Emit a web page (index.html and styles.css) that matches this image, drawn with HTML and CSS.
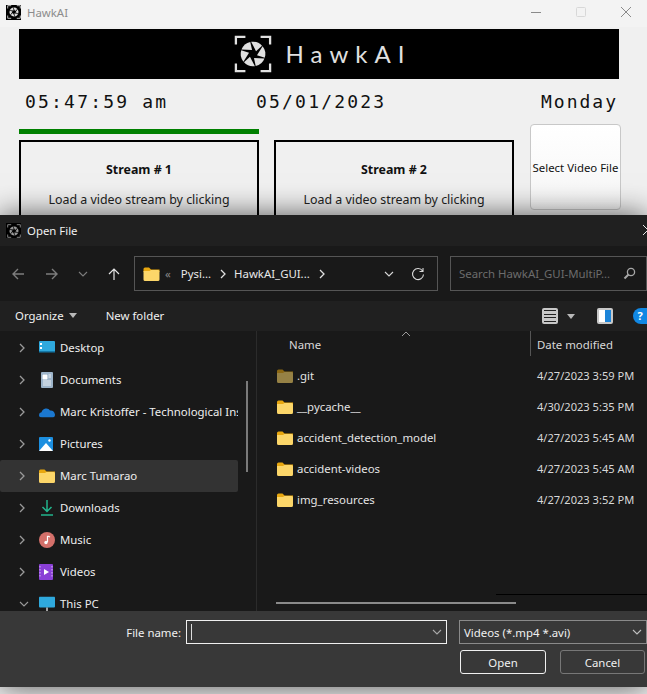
FILE: index.html
```html
<!DOCTYPE html>
<html lang="en">
<head>
  <meta charset="UTF-8">
  <meta name="viewport" content="width=device-width, initial-scale=1.0">
  <title>HawkAI</title>
  <link rel="stylesheet" href="styles.css">
</head>
<body>

  <svg class="defs" width="0" height="0">
    <symbol id="folder" viewBox="0 0 16 14">
      <path d="M0 2 Q0 0.5 1.5 0.5 H5.5 L7.5 2.5 H16 V5 H0 Z" fill="#e8a70f"/>
      <path d="M0 4 H6 L7.5 3 H14.5 Q16 3 16 4.5 V12.5 Q16 14 14.5 14 H1.5 Q0 14 0 12.5 Z" fill="#fcd669"/>
    </symbol>
    <symbol id="shutter" viewBox="0 0 40 40">
      <path d="M2 10 V2 H12 M28 2 H38 V10 M38 30 V38 H28 M12 38 H2 V30" fill="none" stroke="currentColor" stroke-width="2.4"/>
      <g fill="currentColor">
        <path id="blade" d="M18 7.2 A13 13 0 0 1 29.5 11.2 L23.2 17 Z"/>
        <use href="#blade" transform="rotate(60 20 20)"/>
        <use href="#blade" transform="rotate(120 20 20)"/>
        <use href="#blade" transform="rotate(180 20 20)"/>
        <use href="#blade" transform="rotate(240 20 20)"/>
        <use href="#blade" transform="rotate(300 20 20)"/>
      </g>
    </symbol>
    <symbol id="chev" viewBox="0 0 8 12">
      <path d="M2 2 L6 6 L2 10" fill="none" stroke="currentColor" stroke-width="1.3"/>
    </symbol>
    <symbol id="down" viewBox="0 0 12 8">
      <path d="M2 2 L6 6 L10 2" fill="none" stroke="currentColor" stroke-width="1.1"/>
    </symbol>
  </svg>

  <div id="app">
    <div class="app-title">
      <span class="app-icon"><svg width="14" height="14"><use href="#shutter"/></svg></span>
      <span class="app-name">HawkAI</span>
      <div class="win-buttons">
        <svg width="12" height="12" viewBox="0 0 12 12"><path d="M1 6.5 H11" stroke="#8a8a8a"/></svg>
        <svg width="12" height="12" viewBox="0 0 12 12"><rect x="1.5" y="1.5" width="9" height="9" rx="1" fill="none" stroke="#d8d8d8"/></svg>
        <svg width="12" height="12" viewBox="0 0 12 12"><path d="M1 1 L11 11 M11 1 L1 11" stroke="#8a8a8a"/></svg>
      </div>
    </div>

    <div class="banner">
      <svg class="banner-logo" width="38" height="38"><use href="#shutter"/></svg>
      <span class="banner-text">HawkAI</span>
    </div>

    <div class="clock-row">
      <span class="clock-time">05:47:59 am</span>
      <span class="clock-date">05/01/2023</span>
      <span class="clock-day">Monday</span>
    </div>

    <div class="streams">
      <div class="stream-col">
        <div class="stream-bar"></div>
        <div class="stream-box">
          <p class="stream-title">Stream # 1</p>
          <p class="stream-hint">Load a video stream by clicking</p>
        </div>
      </div>
      <div class="stream-col">
        <div class="stream-bar off"></div>
        <div class="stream-box">
          <p class="stream-title">Stream # 2</p>
          <p class="stream-hint">Load a video stream by clicking</p>
        </div>
      </div>
      <button class="select-btn">Select Video File</button>
    </div>
  </div>

  <div id="dialog">
    <div class="dlg-title">
      <span class="app-icon dim"><svg width="14" height="14"><use href="#shutter"/></svg></span>
      <span>Open File</span>
      <svg class="dlg-close" width="12" height="12" viewBox="0 0 12 12"><path d="M1 1 L11 11 M11 1 L1 11" stroke="#e8e8e8"/></svg>
    </div>

    <div class="dlg-nav">
      <div class="nav-buttons">
        <svg width="14" height="14" viewBox="0 0 14 14"><path d="M13 7 H2 M7 2 L2 7 L7 12" fill="none" stroke="#7d7d7d" stroke-width="1.4"/></svg>
        <svg width="14" height="14" viewBox="0 0 14 14"><path d="M1 7 H12 M7 2 L12 7 L7 12" fill="none" stroke="#7d7d7d" stroke-width="1.4"/></svg>
        <svg class="nav-small" width="12" height="8" color="#7d7d7d"><use href="#down"/></svg>
        <svg width="14" height="14" viewBox="0 0 14 14"><path d="M7 13 V2 M2 7 L7 2 L12 7" fill="none" stroke="#e6e6e6" stroke-width="1.2"/></svg>
      </div>
      <div class="address">
        <svg class="addr-folder" width="17" height="14"><use href="#folder"/></svg>
        <span class="addr-more">&laquo;</span>
        <span>Pysi...</span>
        <svg class="addr-sep" width="8" height="12"><use href="#chev"/></svg>
        <span>HawkAI_GUI...</span>
        <svg class="addr-sep" width="8" height="12"><use href="#chev"/></svg>
        <svg class="addr-down" width="12" height="8" color="#d8d8d8"><use href="#down"/></svg>
        <svg class="addr-refresh" width="14" height="14" viewBox="0 0 14 14"><path d="M11.6 4 A5.5 5.5 0 1 0 12.5 7.5 M12 1 V4.5 H8.5" fill="none" stroke="#d8d8d8" stroke-width="1.1"/></svg>
      </div>
      <div class="search">
        <span>Search HawkAI_GUI-MultiP...</span>
        <svg width="13" height="13" viewBox="0 0 13 13"><circle cx="8" cy="5" r="3.6" fill="none" stroke="#a8a8a8" stroke-width="1.3"/><path d="M5.5 7.5 L1.5 11.5" stroke="#a8a8a8" stroke-width="2"/></svg>
      </div>
    </div>

    <div class="dlg-tools">
      <span class="tool-link">Organize <i class="caret"></i></span>
      <span class="tool-link">New folder</span>
      <div class="tool-right">
        <span class="view-icon"><i></i><i></i><i></i><i></i></span>
        <i class="caret"></i>
        <span class="pane-icon"><i></i></span>
        <span class="help-icon">?</span>
      </div>
    </div>

    <div class="dlg-main">
      <div class="sidebar">
        <div class="side-row"><svg class="side-chev" width="8" height="12"><use href="#chev"/></svg>
          <svg width="16" height="14" viewBox="0 0 16 14"><rect width="16" height="11" rx="1" fill="#2fa9dd"/><rect x="1" y="2" width="2" height="2" fill="#fff"/><rect x="1" y="6" width="2" height="2" fill="#fff"/><rect y="10" width="16" height="1.5" fill="#1478a8"/></svg>
          <span>Desktop</span></div>
        <div class="side-row"><svg class="side-chev" width="8" height="12"><use href="#chev"/></svg>
          <svg width="16" height="16" viewBox="0 0 16 16"><rect x="2" width="12" height="16" rx="1" fill="#9db4c9"/><path d="M4 3 H8 V7 H4 Z M9.5 3 H12 M9.5 5 H12 M4 9 H12 M4 11 H12 M4 13 H12" fill="#fff" stroke="#fff" stroke-width=".8"/></svg>
          <span>Documents</span></div>
        <div class="side-row"><svg class="side-chev" width="8" height="12"><use href="#chev"/></svg>
          <svg width="16" height="11" viewBox="0 0 16 11"><path d="M3 11 Q0 11 0 8.5 Q0 6 2.5 5.8 Q3.5 2.5 6.5 2 Q9.5 1.5 11 4 Q15 3.5 16 8 Q16 11 13.5 11 Z" fill="#1b78d0"/></svg>
          <span class="clip">Marc Kristoffer - Technological Ins</span></div>
        <div class="side-row"><svg class="side-chev" width="8" height="12"><use href="#chev"/></svg>
          <svg width="14" height="14" viewBox="0 0 14 14"><rect width="14" height="14" rx="1" fill="#1c8fe0"/><path d="M0 14 L7 6 L14 14 Z" fill="#fff"/><circle cx="10.5" cy="3.5" r="1.2" fill="#fff"/></svg>
          <span>Pictures</span></div>
        <div class="side-row selected"><svg class="side-chev" width="8" height="12"><use href="#chev"/></svg>
          <svg width="16" height="14"><use href="#folder"/></svg>
          <span>Marc Tumarao</span></div>
        <div class="side-row"><svg class="side-chev" width="8" height="12"><use href="#chev"/></svg>
          <svg width="16" height="16" viewBox="0 0 16 16"><path d="M8 0 V11 M3.5 7 L8 11.5 L12.5 7 M2 15 H14" fill="none" stroke="#22b48c" stroke-width="1.5"/></svg>
          <span>Downloads</span></div>
        <div class="side-row"><svg class="side-chev" width="8" height="12"><use href="#chev"/></svg>
          <svg width="16" height="16" viewBox="0 0 16 16"><circle cx="8" cy="8" r="8" fill="#d4706a"/><path d="M8.5 4 V10" stroke="#fff" stroke-width="1.2"/><circle cx="7" cy="10.5" r="1.7" fill="#fff"/><path d="M8.5 4 L11 5" stroke="#fff" stroke-width="1.2"/></svg>
          <span>Music</span></div>
        <div class="side-row"><svg class="side-chev" width="8" height="12"><use href="#chev"/></svg>
          <svg width="14" height="16" viewBox="0 0 14 16"><rect width="14" height="16" rx="1" fill="#8a3fd6"/><path d="M5 5 L10 8 L5 11 Z" fill="#fff"/><path d="M1 2 V14 M13 2 V14" stroke="#d8b8f4" stroke-dasharray="1.5 1.5"/></svg>
          <span>Videos</span></div>
        <div class="side-row"><svg class="side-chev" width="12" height="8" color="#b0b0b0"><use href="#down"/></svg>
          <svg width="16" height="15" viewBox="0 0 16 15"><rect width="16" height="11" rx="1" fill="#2fa9dd"/><path d="M8 11 V15" stroke="#d0d0d0" stroke-width="1.5"/></svg>
          <span>This PC</span></div>
        <div class="side-scroll"></div>
      </div>

      <div class="files">
        <div class="files-head">
          <span class="col-name">Name</span>
          <svg class="sort-caret" width="12" height="6" viewBox="0 0 12 6"><path d="M2 5 L6 1 L10 5" fill="none" stroke="#9a9a9a"/></svg>
          <span class="col-date">Date modified</span>
        </div>
        <div class="file-row"><svg class="git" width="16" height="14"><use href="#folder"/></svg><span class="file-name">.git</span><span class="file-date">4/27/2023 3:59 PM</span></div>
        <div class="file-row"><svg width="16" height="14"><use href="#folder"/></svg><span class="file-name">__pycache__</span><span class="file-date">4/30/2023 5:35 PM</span></div>
        <div class="file-row"><svg width="16" height="14"><use href="#folder"/></svg><span class="file-name">accident_detection_model</span><span class="file-date">4/27/2023 5:45 AM</span></div>
        <div class="file-row"><svg width="16" height="14"><use href="#folder"/></svg><span class="file-name">accident-videos</span><span class="file-date">4/27/2023 5:45 AM</span></div>
        <div class="file-row"><svg width="16" height="14"><use href="#folder"/></svg><span class="file-name">img_resources</span><span class="file-date">4/27/2023 3:52 PM</span></div>
        <div class="h-line"></div>
        <div class="h-scroll"></div>
      </div>
    </div>

    <div class="dlg-foot">
      <div class="foot-row">
        <span class="foot-label">File name:</span>
        <div class="name-input"><i class="cursor"></i><svg width="12" height="8" color="#a8a8a8"><use href="#down"/></svg></div>
        <div class="type-select"><span>Videos (*.mp4 *.avi)</span><svg width="12" height="8" color="#c0c0c0"><use href="#down"/></svg></div>
      </div>
      <div class="foot-buttons">
        <button class="dlg-btn primary">Open</button>
        <button class="dlg-btn">Cancel</button>
      </div>
    </div>
  </div>

</body>
</html>
```

FILE: styles.css
```css
body {
  margin: 0;
  width: 647px;
  height: 694px;
  position: relative;
  overflow: hidden;
  background-color: #f0f0f0;
  font-family: 'Noto Sans', 'Open Sans', sans-serif;
  font-size: 11.4px;
}

.defs {
  position: absolute;
}

.app-title {
  box-sizing: border-box;
  height: 27px;
  background-color: #f3f3f3;
  display: flex;
  align-items: center;
  padding: 0 0 3px 6px;
  color: #8c8c8c;
}

.app-icon {
  width: 15px;
  height: 15px;
  background-color: #000;
  color: #ddd;
  display: flex;
  align-items: center;
  justify-content: center;
  margin-right: 6px;
}

.win-buttons {
  margin-left: auto;
  display: flex;
  gap: 33px;
  padding-right: 15px;
}

.banner {
  margin: 2px 28px 0 19px;
  height: 50px;
  background-color: #000;
  color: #e0e0e0;
  display: flex;
  align-items: center;
  justify-content: center;
  gap: 14px;
}

.banner-text {
  font-family: 'Lato', sans-serif;
  font-size: 24px;
  letter-spacing: 7px;
  margin-right: -7px;
  padding-bottom: 2px;
}

.clock-row {
  display: flex;
  height: 45px;
  align-items: center;
  font-family: 'DejaVu Sans Mono', monospace;
  font-size: 18px;
  letter-spacing: 2.2px;
  color: #111;
}

.clock-time {
  margin-left: 25px;
  width: 231px;
}

.clock-date {
  width: 285px;
}

.clock-day {
  letter-spacing: 2px;
}

.stream-title, .stream-hint {
  font-size: 12.4px;
}

.streams {
  display: flex;
  padding-left: 19px;
}

.stream-col {
  width: 240px;
  margin-right: 15px;
  padding-top: 5px;
}

.stream-bar {
  height: 5px;
  background-color: #008000;
  margin-bottom: 6px;
}

.stream-bar.off {
  background-color: transparent;
}

.stream-box {
  box-sizing: border-box;
  height: 200px;
  border: 2px solid #000;
  text-align: center;
}

.stream-title {
  margin: 20px 0 0;
  font-weight: bold;
  color: #111;
  line-height: 16px;
}

.stream-hint {
  margin: 14px 0 0;
  color: #222;
  line-height: 16px;
}

.select-btn {
  box-sizing: border-box;
  width: 91px;
  height: 86px;
  margin-left: 1px;
  padding: 0;
  background: linear-gradient(#ffffff, #f6f6f6);
  border: 1px solid #c8c8c8;
  border-radius: 4px;
  font-family: inherit;
  font-size: 11.4px;
  color: #111;
  white-space: nowrap;
}

/* file dialog sits over the app window */
#dialog {
  position: absolute;
  left: 0;
  top: 215px;
  width: 647px;
  height: 472px;
  display: flex;
  flex-direction: column;
  background-color: #202020;
  color: #f0f0f0;
  box-shadow: 0 0 28px rgba(0, 0, 0, 0.65);
}

.dlg-title {
  height: 31px;
  flex: none;
  display: flex;
  align-items: center;
  padding-left: 6px;
  position: relative;
}

.app-icon.dim {
  color: #999;
}

.dlg-close {
  position: absolute;
  right: -7px;
  top: 9px;
}

.dlg-nav {
  height: 55px;
  flex: none;
  background-color: #191919;
  display: flex;
  align-items: center;
}

.nav-buttons {
  width: 134px;
  display: flex;
  align-items: center;
  padding-left: 11px;
  gap: 20px;
  box-sizing: border-box;
}

.nav-small {
  margin: 0 -2px 0 -2px;
}

.address, .search {
  box-sizing: border-box;
  height: 35px;
  border: 1px solid #555;
  display: flex;
  align-items: center;
}

.address {
  width: 304px;
  padding-left: 8px;
  color: #e8e8e8;
}

.addr-folder {
  margin-right: 5px;
}

.addr-more {
  color: #888;
  margin-right: 10px;
}

.addr-sep {
  margin: 0 7px 0 8px;
  color: #e0e0e0;
}

.addr-down {
  margin-left: 50px;
}

.addr-refresh {
  margin-left: 16px;
}

.search {
  width: 197px;
  margin-left: 12px;
  padding-left: 8px;
  color: #6c6c6c;
  gap: 13px;
  white-space: nowrap;
}

.dlg-tools {
  height: 30px;
  flex: none;
  display: flex;
  align-items: center;
  padding-left: 15px;
  gap: 29px;
  position: relative;
}

.tool-link {
  display: flex;
  align-items: center;
  gap: 5px;
  margin-top: -2px;
}

.caret {
  display: inline-block;
  width: 0;
  height: 0;
  border-left: 4px solid transparent;
  border-right: 4px solid transparent;
  border-top: 5px solid #b8b8b8;
}

.tool-right {
  margin-left: auto;
  display: flex;
  align-items: center;
}

.view-icon {
  width: 16px;
  height: 16px;
  background-color: #c8c8c8;
  border-radius: 2px;
  display: flex;
  flex-direction: column;
  justify-content: space-evenly;
  margin-right: 9px;
}

.view-icon i {
  display: block;
  height: 1px;
  margin: 0 2px;
  background-color: #222;
}

.pane-icon {
  box-sizing: border-box;
  width: 16px;
  height: 16px;
  margin: 0 20px 0 22px;
  border: 2px solid #c8c8c8;
  border-radius: 2px;
  background-color: #fff;
  display: flex;
  justify-content: flex-end;
}

.pane-icon i {
  display: block;
  width: 6px;
  background-color: #1c84d8;
}

.help-icon {
  width: 14px;
  height: 16px;
  flex: none;
  border-radius: 8px 0 0 8px;
  background-color: #1188e4;
  color: #fff;
  font-weight: bold;
  font-size: 11px;
  line-height: 16px;
  text-align: center;
}

.dlg-main {
  flex: 1;
  display: flex;
  background-color: #191919;
  overflow: hidden;
  min-height: 0;
}

.sidebar {
  width: 257px;
  flex: none;
  box-sizing: border-box;
  border-right: 1px solid #2b2b2b;
  position: relative;
  padding-top: 1px;
}

.side-row {
  height: 32px;
  width: 238px;
  box-sizing: border-box;
  display: flex;
  align-items: center;
  position: relative;
  padding-left: 60px;
  padding-bottom: 1px;
  color: #eee;
  white-space: nowrap;
}

.side-row svg {
  position: absolute;
  left: 39px;
  top: 50%;
  transform: translateY(-50%);
}

.side-row .side-chev {
  left: 18px;
  color: #9a9a9a;
}

.side-row.selected {
  background-color: #333;
  border-radius: 2px;
}

.clip {
  overflow: hidden;
}

.side-scroll {
  position: absolute;
  left: 246px;
  top: 50px;
  width: 2px;
  height: 91px;
  background-color: #7a7a7a;
}

.files {
  flex: 1;
  position: relative;
  padding-left: 19px;
}

.files-head {
  height: 26px;
  position: relative;
  margin-bottom: 3px;
}

.col-name {
  position: absolute;
  left: 13px;
  top: 6px;
  color: #d8d8d8;
}

.sort-caret {
  position: absolute;
  left: 124px;
  top: 0;
}

.col-date {
  position: absolute;
  left: 254px;
  top: 6px;
  padding-left: 6px;
  height: 25px;
  border-left: 1px solid #555;
  margin-top: -6px;
  line-height: 27px;
  color: #d8d8d8;
  white-space: nowrap;
}

.file-row {
  height: 31px;
  display: flex;
  align-items: center;
  position: relative;
}

.file-row svg {
  margin: 0 4px 0 1px;
}

.file-row .git {
  opacity: 0.55;
}

.file-name {
  color: #e4e4e4;
}

.file-date {
  position: absolute;
  left: 261px;
  font-size: 11.1px;
  color: #d8d8d8;
  white-space: nowrap;
}

.h-line {
  position: absolute;
  left: 239px;
  right: 0;
  top: 263px;
  height: 1px;
  background-color: #000;
}

.h-scroll {
  position: absolute;
  left: 19px;
  width: 240px;
  top: 271px;
  height: 2px;
  background-color: #8a8a8a;
}

.dlg-foot {
  height: 76px;
  flex: none;
  background-color: #383838;
  box-sizing: border-box;
  padding-top: 9px;
}

.foot-row {
  display: flex;
  align-items: center;
}

.foot-label {
  width: 181px;
  text-align: right;
  margin-right: 5px;
}

.name-input, .type-select {
  box-sizing: border-box;
  height: 24px;
  display: flex;
  align-items: center;
  justify-content: space-between;
  padding: 0 3px 0 4px;
}

.name-input {
  width: 261px;
  border: 1px solid #f0f0f0;
}

.cursor {
  display: block;
  width: 1px;
  height: 16px;
  background-color: #ddd;
}

.type-select {
  width: 188px;
  margin-left: 12px;
  border: 1px solid #8a8a8a;
  white-space: nowrap;
}

.foot-buttons {
  display: flex;
  gap: 14px;
  margin: 6px 0 0 460px;
}

.dlg-btn {
  box-sizing: border-box;
  width: 85px;
  height: 24px;
  padding: 0;
  background-color: #383838;
  border: 1px solid #777;
  border-radius: 3px;
  color: #f0f0f0;
  font-family: inherit;
  font-size: 11.4px;
}

.dlg-btn.primary {
  width: 86px;
  border-color: #f0f0f0;
}
```
